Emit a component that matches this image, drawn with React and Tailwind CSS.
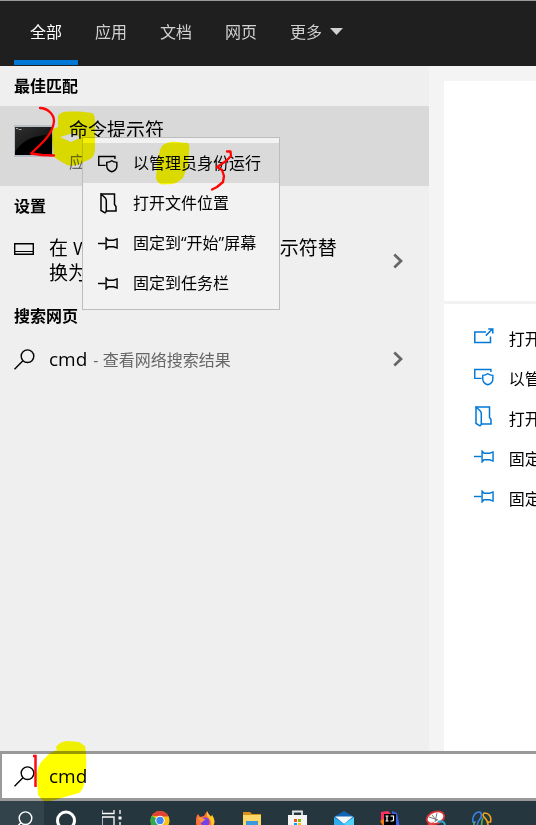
import React, { useState } from "react";

const TABS = ["全部", "应用", "文档", "网页"];

function OpenIcon() {
   return (
      <svg width="20" height="16" viewBox="0 0 20 16" fill="none" stroke="currentColor" strokeWidth="1.5">
         <path d="M12 4H.8v10.6h15.7V8.5" />
         <path d="M11.8 7.6L18.4 1M14.2 1h4.6v4.6" />
      </svg>
   );
}

function RunAsIcon() {
   return (
      <svg width="21" height="19" viewBox="0 0 21 19" fill="none" stroke="currentColor" strokeWidth="1.5">
         <path d="M8 11.500H.8V2.200h17v2.500" />
         <path d="M14.5 6.600c1.5 1.2 3.3 1.7 5.3 1.7v3.7c0 3-2 5-5.3 6.2-3.3-1.2-5.3-3.2-5.3-6.2V8.3c2 0 3.800-.5 5.300-1.700z" />
      </svg>
   );
}

function FolderIcon() {
   return (
      <svg width="17" height="21" viewBox="0 0 17 21" fill="none" stroke="currentColor" strokeWidth="1.5">
         <path d="M1 1h13.500v10.500l1.500 2V18H6.500" />
         <path d="M1 1l4.300 4q1 1 1 3v10.500l-1.300 1.300L1 17.500z" />
      </svg>
   );
}

function PinIcon() {
   return (
      <svg width="21" height="13" viewBox="0 0 21 13" fill="none" stroke="currentColor" strokeWidth="1.5">
         <path d="M0 6.500h8" />
         <path d="M8.500.8v11.400l2-2.200h6l3.500 1.300V1.700L16.500 3h-6z" />
      </svg>
   );
}

function SearchIcon() {
   return (
      <svg width="21" height="21" viewBox="0 0 21 21" fill="none" stroke="currentColor" strokeWidth="1.400">
         <circle cx="13.500" cy="7.200" r="6.300" />
         <path d="M.5 20.300l8.400-8.600" />
      </svg>
   );
}

function DriveIcon() {
   return (
      <svg width="20" height="12" viewBox="0 0 20 12" fill="none" stroke="currentColor" strokeWidth="1.400">
         <path d="M.7.7h18.600v10.600H.7z" />
         <path d="M.7 8.500h18.600" strokeWidth="1" />
      </svg>
   );
}

function Chevron() {
   return (
      <svg width="10" height="16" viewBox="0 0 10 16" fill="none" stroke="#666" strokeWidth="2.700">
         <path d="M1.300 1.500L8 8l-6.700 6.500" />
      </svg>
   );
}

function ConsoleIcon() {
   return (
      <svg width="39" height="32" viewBox="0 0 39 32">
         <defs>
            <linearGradient id="glass" x1="0" y1="0" x2="1" y2="1">
               <stop offset="0" stopColor="#303030" />
               <stop offset="1" stopColor="#080808" />
            </linearGradient>
         </defs>
         <rect width="39" height="32" fill="#b6bec6" />
         <rect x="1" y="2" width="37" height="28" fill="#000" />
         <path d="M1 2h37v8C24 9 8 14 1 27z" fill="url(#glass)" />
         <path d="M2 3.500h2M4.500 4.500h3" stroke="#aaa" strokeWidth="1" />
      </svg>
   );
}

const ACTIONS = [
   { label: "打开", Icon: OpenIcon },
   { label: "以管理员身份运行", Icon: RunAsIcon },
   { label: "打开文件位置", Icon: FolderIcon },
   { label: "固定到“开始”屏幕", Icon: PinIcon },
   { label: "固定到任务栏", Icon: PinIcon }
];

function Header({ active, onSelect }) {
   return (
      <nav className="flex h-[66px] shrink-0 gap-px border-t border-[#999] bg-[#1f1f1f] pl-[14px] text-base text-[#d0d0d0]">
         {TABS.map((tab) => (
            <button
               key={tab}
               onClick={() => onSelect(tab)}
               className={`h-16 border-b-5 px-4 pt-0.5 ${tab === active ? "border-[#0078d7] text-white" : "border-transparent"}`}
            >
               {tab}
            </button>
         ))}
         <button className="flex h-16 items-center gap-2 border-b-5 border-transparent px-4 pt-0.5">
            更多
            <svg width="13" height="7" viewBox="0 0 13 7" fill="currentColor">
               <path d="M0 0h13L6.500 7z" />
            </svg>
         </button>
      </nav>
   );
}

function ContextMenu() {
   return (
      <div role="menu" className="absolute top-[71px] left-[82px] border border-[#bdbdbd] bg-[#f2f2f2] pt-[5px] pb-1.5">
         {ACTIONS.slice(1).map(({ label, Icon }, index) => (
            <button
               key={label}
               role="menuitem"
               className={`flex h-10 w-full items-center pr-[18px] pl-[15px] text-left whitespace-nowrap ${index === 0 ? "bg-[#dadada]" : ""}`}
            >
               <span className="flex w-5 shrink-0 justify-center">
                  <Icon />
               </span>
               <span className="pl-[15px]">{label}</span>
            </button>
         ))}
      </div>
   );
}

function Results() {
   return (
      <main className="relative w-4/5 shrink-0 bg-[#efefef]">
         <h2 className="flex h-10 items-center pl-[14px] font-bold">最佳匹配</h2>
         <button className="flex h-20 w-full items-center bg-[#d9d9d9] pl-[14px] text-left">
            <span className="pb-2.5">
               <ConsoleIcon />
            </span>
            <span className="flex flex-col gap-1 pl-4">
               <span className="text-[19px] leading-7">命令提示符</span>
               <span className="leading-7 text-[#666]">应用</span>
            </span>
         </button>

         <h2 className="flex h-10 items-center pl-[14px] font-bold">设置</h2>
         <button className="flex h-[70px] w-full items-center pr-[26px] pl-[14px] text-left">
            <span className="w-[35px] shrink-0 pb-6">
               <DriveIcon />
            </span>
            <span className="flex-1 pr-12 text-[19px] leading-[25px]">
               在 WIN + X 菜单中将命令提示符替换为 PowerShell
            </span>
            <Chevron />
         </button>

         <h2 className="flex h-10 items-center pl-[14px] font-bold">搜索网页</h2>
         <button className="flex h-[46px] w-full items-center pr-[26px] pl-[14px] text-left">
            <span className="w-[35px] shrink-0">
               <SearchIcon />
            </span>
            <span className="flex flex-1 items-baseline gap-1.5 text-[#666]">
               <span className="text-[19px] leading-7 text-black">cmd</span>
               <span>- 查看网络搜索结果</span>
            </span>
            <Chevron />
         </button>

         <ContextMenu />

         {/* Marker and pen strokes */}
         <svg className="pointer-events-none absolute top-0 left-0 mix-blend-multiply" width="300" height="140" viewBox="0 66 300 140" fill="#ff0">
            <path d="M58 116Q60 112 67 111.500L80 111.500L92 113Q95 114 95 122L95 150Q94 158 88 160L80 164Q72 167 67 165L60 161L54 157L52 140L53 129L58 127ZM60 137L71 142L80 138L75 133L70 134Z" fillRule="evenodd" />
            <path d="M162 146Q168 141 177 142L188 143Q190 145 189 153L188 165L183 178Q179 182 173 184L162 184.500Q157 183 156 178L157 163L160 150Z" />
         </svg>
         <svg className="pointer-events-none absolute top-0 left-0" width="300" height="140" viewBox="0 66 300 140" fill="none" stroke="#ff0505" strokeWidth="2.300" strokeLinecap="round" strokeLinejoin="round">
            <path d="M40 108C47 108 54 114 54 121C53 132 46 139 40 145L31 153.500L42 155L54 155.500" />
            <path d="M227 151.500H230.500L231 156L226 161L217 167L222 170L224 176L223 182L217 187L212 189.500" />
         </svg>
      </main>
   );
}

function Preview() {
   return (
      <aside className="min-w-0 flex-1 overflow-hidden bg-[#f4f4f4] pt-[15px] pl-[15px]">
         <div className="h-full bg-white">
            <div className="h-[223px] border-b-3 border-[#f2f2f2]" />
            <div className="pt-[15px] pl-[30px]">
               {ACTIONS.map(({ label, Icon }) => (
                  <button key={label} className="flex h-10 items-center whitespace-nowrap">
                     <span className="flex w-5 shrink-0 justify-center pb-1.5 text-[#0078d7]">
                        <Icon />
                     </span>
                     <span className="pl-[15px]">{label}</span>
                  </button>
               ))}
            </div>
         </div>
      </aside>
   );
}

function SearchBox() {
   const [query, setQuery] = useState("cmd");

   return (
      <div className="relative flex h-[50px] shrink-0 items-center border-y-3 border-l-2 border-[#999] bg-white pl-3">
         <label htmlFor="query" aria-label="搜索" className="w-[35px] shrink-0">
            <SearchIcon />
         </label>
         <input
            id="query"
            value={query}
            onChange={(e) => setQuery(e.target.value)}
            className="min-w-0 flex-1 text-[19px] outline-none"
         />
         <svg className="pointer-events-none absolute -top-4 left-0 mix-blend-multiply" width="100" height="68" viewBox="2 738 100 68" fill="#ff0">
            <path d="M56 747Q60 741 68 741L79 742L85 746Q87 755 86 770L84 784Q83 790 79 793L68 796L58 799L50 801H43L38 795L37 775Q38 765 43 760L50 753L57 750Z" />
         </svg>
         <svg className="pointer-events-none absolute -top-4 left-0" width="100" height="68" viewBox="2 738 100 68" fill="none" stroke="#ff0a14" strokeWidth="2.500">
            <path d="M33 756h2.500v31" />
         </svg>
      </div>
   );
}

const APPS = [
   {
      name: "Cortana",
      art: <circle cx="10" cy="10.500" r="8.500" fill="none" stroke="#fff" strokeWidth="3" />
   },
   {
      name: "任务视图",
      art: (
         <g fill="none" stroke="#fff" strokeWidth="1.300">
            <path d="M0 0v3.500h12V0M0 7h12v9H0zM18 0v4M18 12v8" />
            <path d="M16.500 6.500h3v3h-3z" fill="#fff" stroke="none" />
         </g>
      )
   },
   {
      name: "Chrome",
      art: (
         <g>
            <circle cx="12" cy="10.500" r="9.500" fill="#fbc116" />
            <path d="M12 10.500L3.800 5.700A9.500 9.500 0 0 0 11 20z" fill="#2da94f" />
            <path d="M3.800 5.700A9.500 9.500 0 0 1 20.500 6.500H12z" fill="#e34133" />
            <circle cx="12" cy="10.500" r="4.700" fill="#fff" />
            <circle cx="12" cy="10.500" r="3.700" fill="#4285f4" />
         </g>
      )
   },
   {
      name: "Firefox",
      art: (
         <g>
            <path d="M4 4l2 3 4-1 3-5c1 3 3 4 4 6l1-2c2 3 3 6 2 9-1 5-5 7-9 7S2 18 2 12c0-3 0-6 2-8z" fill="#ff7139" />
            <path d="M13 1c1 3 3 4 4 6l1-2c2 3 3 6 2 9l-3 3c1-5-1-8-4-11z" fill="#ffca28" />
            <circle cx="11" cy="12" r="4.500" fill="#7542e5" />
            <path d="M4 8c3-1 5 0 8 2-3 0-3 2-5 3z" fill="#ff9640" />
         </g>
      )
   },
   {
      name: "文件资源管理器",
      art: (
         <g>
            <path d="M3 2h7l2 2h9v16H3z" fill="#d99216" />
            <path d="M3 5h18v15H3z" fill="#ffd768" />
            <path d="M6 20v-9h12v9h-3v-5H9v5z" fill="#3999dc" />
         </g>
      )
   },
   {
      name: "Microsoft Store",
      art: (
         <g>
            <path d="M7 6V1.500h9V6" fill="none" stroke="#e5e5e5" strokeWidth="1.800" />
            <path d="M2 5h19v16H2z" fill="#f4f4f4" />
            <path d="M8 9h3v3H8z" fill="#f25022" />
            <path d="M12 9h3v3h-3z" fill="#7fba00" />
            <path d="M8 13h3v3H8z" fill="#00a4ef" />
            <path d="M12 13h3v3h-3z" fill="#ffb900" />
         </g>
      )
   },
   {
      name: "邮件",
      art: (
         <g>
            <path d="M2 7l10-6 10 6v13H2z" fill="#1066b5" />
            <path d="M3 6.500h18L12 14z" fill="#f5f8fa" />
            <path d="M2 7l10 7 10-7v13H2z" fill="#2aaef0" />
            <path d="M22 7v13L12 14z" fill="#50d3fb" />
         </g>
      )
   },
   {
      name: "IntelliJ IDEA",
      art: (
         <g>
            <path d="M3 2l7-1 4 4-5 9-6-2z" fill="#fe315d" />
            <path d="M2 11l5-3v11z" fill="#f97a12" />
            <path d="M14 1l5 2 3 15-6 2z" fill="#3b63e8" />
            <path d="M6 4h12v16H6z" fill="#000" />
            <path d="M7.500 6h3M9 6v5M7.500 11h3M12.500 6h3v4q0 1-1.500 1h-1.500M8 16h4" fill="none" stroke="#fff" strokeWidth="1.200" />
         </g>
      )
   },
   {
      name: "截图工具",
      art: (
         <g>
            <ellipse cx="11.500" cy="8" rx="9" ry="6" transform="rotate(-20 11 8)" fill="#fff" stroke="#d83131" strokeWidth="1.800" />
            <path d="M5 7l9 3M13 3l-2 9M8 5l5 6" stroke="#777" strokeWidth="1" fill="none" />
            <path d="M3 14l7-2-2 5z" fill="#e54848" />
            <path d="M14 12q6-2 7 3" stroke="#2aa6c8" strokeWidth="2.200" fill="none" />
         </g>
      )
   },
   {
      name: "Navicat",
      art: (
         <g fill="none" strokeWidth="1.600">
            <path d="M6 12H3C2 7 5 2 9 2c3 0 3 5 1 7-2 2-3 4-3 9" stroke="#3b82e8" />
            <path d="M18 12h2.500C22 6 18 3 15 3c-2 0-3 3 0 5 1 1 3 3 3 7" stroke="#f0a519" />
            <path d="M12 18c-1-5 0-8 1-10M4 12v7" stroke="#55b04b" />
         </g>
      )
   }
];

function Taskbar() {
   return (
      <footer className="flex h-6 shrink-0 overflow-hidden bg-[#25363f] text-white">
         <button aria-label="搜索" className="flex h-10 w-11 shrink-0 items-center justify-center bg-[#33434c]">
            <SearchIcon />
         </button>
         {APPS.map((app) => (
            <button key={app.name} aria-label={app.name} className="flex h-10 w-[46px] shrink-0 items-center justify-center">
               <svg width="22" height="22" viewBox="0 0 22 22">
                  {app.art}
               </svg>
            </button>
         ))}
      </footer>
   );
}

function App() {
   const [active, setActive] = useState(TABS[0]);

   return (
      <div className="flex h-screen flex-col overflow-hidden bg-[#efefef] font-['Open_Sans','Noto_Sans_CJK_SC',sans-serif] text-base text-black">
         <Header active={active} onSelect={setActive} />
         <div className="flex min-h-0 flex-1">
            <Results />
            <Preview />
         </div>
         <SearchBox />
         <Taskbar />
      </div>
   );
}

export default App;
